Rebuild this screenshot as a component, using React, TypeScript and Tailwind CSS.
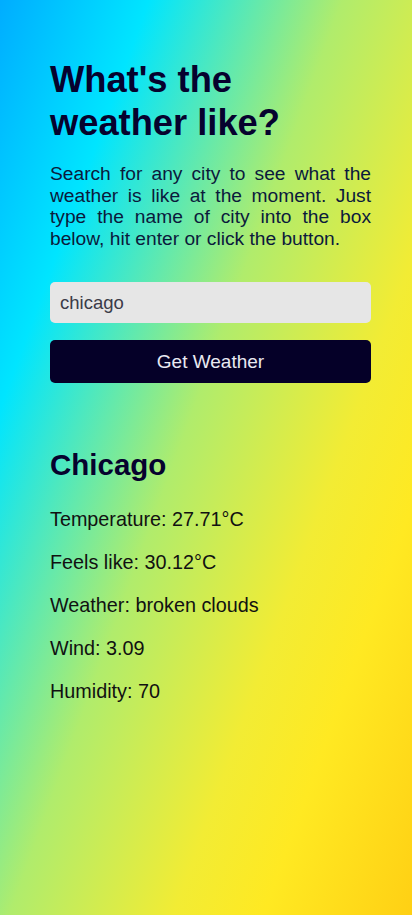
import React, { useState } from 'react';

// Current conditions shown under the search form
const conditions = [
  { label: 'Temperature', value: '27.71°C' },
  { label: 'Feels like', value: '30.12°C' },
  { label: 'Weather', value: 'broken clouds' },
  { label: 'Wind', value: '3.09' },
  { label: 'Humidity', value: '70' },
];

export default function App() {
  const [city, setCity] = useState('chicago');

  return (
    <div
      className="min-h-screen w-full bg-[linear-gradient(110deg,#00adff_0%,#00e5ff_20%,#b0ec6c_46%,#f2ec34_68%,#ffe922_80%,#ffd014_100%)]"
      style={{ fontFamily: '"Liberation Sans", Arial, sans-serif' }}
    >
      <div className="ml-[50px] w-[321px] pt-[58px] pb-10">
        {/* Header */}
        <h1 className="text-[36.3px] leading-[43px] font-bold text-[#06022e]">
          What's the weather like?
        </h1>
        <p className="mt-[19px] text-[19.2px] leading-[21.6px] text-justify text-[#0b1a3c]">
          Search for any city to see what the weather is like at the moment. Just
          type the name of city into the box below, hit enter or click the button.
        </p>

        {/* Search */}
        <form
          className="mt-[33px] flex flex-col gap-[17px]"
          onSubmit={(e) => e.preventDefault()}
        >
          <input
            type="text"
            value={city}
            onChange={(e) => setCity(e.target.value)}
            className="h-[41px] w-full rounded-[5px] bg-[#e6e6e6] px-[10px] text-[18.5px] text-[#3b3b48] outline-none"
          />
          <button
            type="submit"
            className="h-[43px] w-full rounded-[5px] bg-[#050028] text-[19px] text-[#e9e9f2]"
          >
            Get Weather
          </button>
        </form>

        {/* Result */}
        <div className="mt-[65px]">
          <h2 className="text-[29.5px] leading-[34px] font-bold text-[#06022e]">Chicago</h2>
          <div className="mt-[26px] flex flex-col gap-[20px]">
            {conditions.map((c) => (
              <p key={c.label} className="text-[19.8px] leading-[22.8px] text-[#111111]">
                {c.label}: {c.value}
              </p>
            ))}
          </div>
        </div>
      </div>
    </div>
  );
}
